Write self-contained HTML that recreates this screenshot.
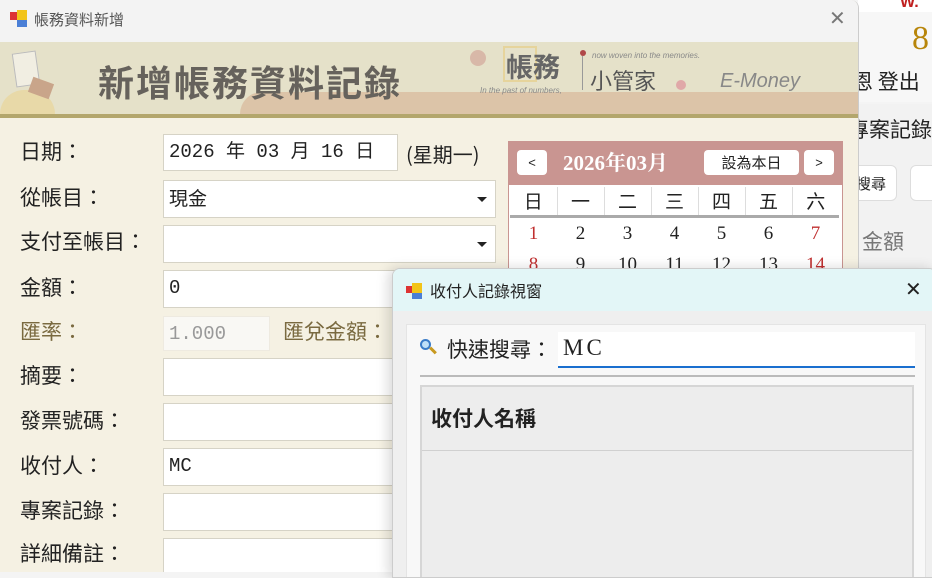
<!DOCTYPE html>
<html><head><meta charset="utf-8"><style>
*{box-sizing:border-box;margin:0;padding:0}
body{width:932px;height:572px;overflow:hidden;position:relative;background:#f4f4f4;font-family:"Liberation Sans","Noto Sans CJK TC",sans-serif;color:#222}
.a{position:absolute;white-space:nowrap}
.lbl{position:absolute;left:20px;font-size:21px;color:#222;font-family:"Noto Sans CJK TC",sans-serif}
.inp{position:absolute;left:163px;background:#fff;border:1px solid #d6d3c6;font-family:"Liberation Mono","Noto Sans CJK TC",monospace;font-size:19px;padding-left:5px;line-height:34px}
.arr{position:absolute;right:8px;top:16px;width:0;height:0;border-left:5px solid transparent;border-right:5px solid transparent;border-top:5px solid #222}
.cal td{width:47px;height:29px;text-align:center;font-size:19px;font-family:"Liberation Serif","Noto Serif CJK SC",serif}
</style></head><body>
<!-- right background app -->
<div class="a" style="left:858px;top:0;width:74px;height:12px;background:#fff"></div>
<div class="a" style="left:900px;top:-6px;font-size:16px;color:#c02020;font-weight:bold">W.</div>
<div class="a" style="left:858px;top:12px;width:74px;height:90px;background:#f7f7f7"></div>
<div class="a" style="left:912px;top:22px;font-size:34px;color:#b8860b;font-family:'Liberation Serif',serif;line-height:34px">8</div>
<div class="a" style="left:852px;top:66px;font-size:21px;font-family:'Noto Sans CJK TC',sans-serif">恩 登出</div>
<div class="a" style="left:858px;top:104px;width:74px;height:468px;background:#f2f2f2"></div>
<div class="a" style="left:848px;top:114px;font-size:21px;font-family:'Noto Sans CJK TC',sans-serif">專案記錄</div>
<div class="a" style="left:845px;top:165px;width:52px;height:36px;background:#fff;border:1px solid #ddd;border-radius:6px;font-size:15px;padding:7px 0 0 10px">搜尋</div>
<div class="a" style="left:910px;top:165px;width:40px;height:36px;background:#fff;border:1px solid #ddd;border-radius:6px"></div>
<div class="a" style="left:862px;top:226px;font-size:21px;color:#777;font-family:'Noto Sans CJK TC',sans-serif">金額</div>

<!-- main window -->
<div class="a" style="left:0;top:0;width:859px;height:572px;background:#f5f1e3;border-right:1px solid #ccc;border-radius:0 8px 0 0;overflow:hidden">
 <div class="a" style="left:0;top:0;width:859px;height:42px;background:#f3f3f3"></div>
 <div class="a" style="left:10px;top:12px;width:8px;height:8px;background:#d33"></div>
 <div class="a" style="left:17px;top:10px;width:10px;height:10px;background:#f2c418"></div>
 <div class="a" style="left:17px;top:20px;width:10px;height:7px;background:#4a7fd6"></div>
 <div class="a" style="left:34px;top:9px;font-size:15px;color:#555;font-family:'Noto Sans CJK TC',sans-serif">帳務資料新增</div>
 <div class="a" style="left:829px;top:6px;font-size:20px;color:#777">✕</div>
 <!-- banner -->
 <div class="a" style="left:0;top:42px;width:859px;height:76px;background:#e5e1c9;border-bottom:4px solid #b3a66c"></div>
 <div class="a" style="left:240px;top:92px;width:620px;height:22px;background:#dcc4a8;border-radius:120px 0 0 0"></div>
 <div class="a" style="left:0;top:90px;width:55px;height:24px;background:#e8d9a8;border-radius:40px 40px 0 0"></div>
 <div class="a" style="left:14px;top:52px;width:24px;height:34px;background:#f1eee2;border:1px solid #bbb;transform:rotate(-8deg)"></div>
 <div class="a" style="left:30px;top:80px;width:22px;height:16px;background:#c9a58a;transform:rotate(20deg)"></div>
 <div class="a" style="left:98px;top:56px;font-size:36px;color:#66625c;letter-spacing:2px;font-weight:bold;font-family:'Noto Sans CJK TC',sans-serif;line-height:50px">新增帳務資料記錄</div>
 <div class="a" style="left:470px;top:50px;width:16px;height:16px;border-radius:50%;background:#d8b8a8"></div>
 <div class="a" style="left:503px;top:46px;width:34px;height:36px;border:2px solid #e6d49c"></div>
 <div class="a" style="left:506px;top:46px;font-size:27px;color:#666;font-weight:bold;font-family:'Noto Sans CJK TC',sans-serif">帳務</div>
 <div class="a" style="left:480px;top:86px;font-size:8px;color:#888;font-style:italic">In the past of numbers,</div>
 <div class="a" style="left:580px;top:50px;width:6px;height:6px;border-radius:50%;background:#b04848"></div>
 <div class="a" style="left:582px;top:56px;width:1px;height:34px;background:#999"></div>
 <div class="a" style="left:592px;top:51px;font-size:8px;color:#888;font-style:italic">now woven into the memories.</div>
 <div class="a" style="left:590px;top:64px;font-size:22px;color:#555;font-family:'Noto Sans CJK TC',sans-serif">小管家</div>
 <div class="a" style="left:676px;top:80px;width:10px;height:10px;border-radius:50%;background:#e0a8a8"></div>
 <div class="a" style="left:720px;top:70px;font-size:20px;color:#888;font-style:italic">E-Money</div>
 <!-- labels -->
 <div class="lbl" style="top:136px">日期：</div>
 <div class="lbl" style="top:182px">從帳目：</div>
 <div class="lbl" style="top:226px">支付至帳目：</div>
 <div class="lbl" style="top:272px">金額：</div>
 <div class="lbl" style="top:316px;color:#7a6a40">匯率：</div>
 <div class="lbl" style="top:360px">摘要：</div>
 <div class="lbl" style="top:405px">發票號碼：</div>
 <div class="lbl" style="top:450px">收付人：</div>
 <div class="lbl" style="top:495px">專案記錄：</div>
 <div class="lbl" style="top:538px">詳細備註：</div>
 <div class="inp" style="top:134px;width:235px;height:37px">2026 年 03 月 16 日</div>
 <div class="a" style="left:406px;top:139px;font-size:20px;font-family:'Noto Sans CJK TC',sans-serif">(星期一)</div>
 <div class="inp" style="top:180px;width:333px;height:38px;font-family:'Noto Sans CJK TC',sans-serif">現金<div class="arr"></div></div>
 <div class="inp" style="top:225px;width:333px;height:38px"><div class="arr"></div></div>
 <div class="inp" style="top:270px;width:240px;height:38px">0</div>
 <div class="inp" style="top:316px;width:107px;height:35px;background:#f9f8f4;border-color:#eeeae0;color:#999">1.000</div>
 <div class="a" style="left:283px;top:316px;font-size:21px;color:#7a6a40;font-family:'Noto Sans CJK TC',sans-serif">匯兌金額：</div>
 <div class="inp" style="top:358px;width:240px;height:38px"></div>
 <div class="inp" style="top:403px;width:240px;height:38px"></div>
 <div class="inp" style="top:448px;width:240px;height:38px">MC</div>
 <div class="inp" style="top:493px;width:240px;height:38px"></div>
 <div class="inp" style="top:538px;width:240px;height:40px"></div>
 <!-- calendar -->
 <div class="a" style="left:508px;top:141px;width:335px;height:140px;background:#fff;border:1px solid #c99591"></div>
 <div class="a" style="left:508px;top:141px;width:335px;height:44px;background:#c99591"></div>
 <div class="a" style="left:517px;top:150px;width:30px;height:25px;background:#fff;border-radius:4px;text-align:center;font-size:13px;line-height:25px">&lt;</div>
 <div class="a" style="left:563px;top:147px;font-size:21px;color:#fff;font-family:'Liberation Serif','Noto Serif CJK SC',serif;font-weight:bold">2026年03月</div>
 <div class="a" style="left:704px;top:150px;width:95px;height:25px;background:#fff;border-radius:4px;text-align:center;font-size:15px;line-height:25px;font-family:'Noto Sans CJK TC',sans-serif">設為本日</div>
 <div class="a" style="left:804px;top:150px;width:30px;height:25px;background:#fff;border-radius:4px;text-align:center;font-size:13px;line-height:25px">&gt;</div>
 <table class="a cal" style="left:510px;top:187px;border-collapse:collapse">
  <tr style="border-bottom:3px solid #aaa"><td style="border-right:1px solid #ddd;font-family:'Noto Sans CJK TC'">日</td><td style="border-right:1px solid #ddd;font-family:'Noto Sans CJK TC'">一</td><td style="border-right:1px solid #ddd;font-family:'Noto Sans CJK TC'">二</td><td style="border-right:1px solid #ddd;font-family:'Noto Sans CJK TC'">三</td><td style="border-right:1px solid #ddd;font-family:'Noto Sans CJK TC'">四</td><td style="border-right:1px solid #ddd;font-family:'Noto Sans CJK TC'">五</td><td style="font-family:'Noto Sans CJK TC'">六</td></tr>
  <tr style="height:34px"><td style="color:#c03030">1</td><td>2</td><td>3</td><td>4</td><td>5</td><td>6</td><td style="color:#c03030">7</td></tr>
  <tr><td style="color:#c03030">8</td><td>9</td><td>10</td><td>11</td><td>12</td><td>13</td><td style="color:#c03030">14</td></tr>
 </table>
</div>

<!-- popup -->
<div class="a" style="left:392px;top:268px;width:545px;height:310px;background:#efefef;border:1px solid #ccc;border-radius:8px 8px 0 0;box-shadow:-4px 0 12px rgba(0,0,0,.15);overflow:hidden">
 <div class="a" style="left:0;top:0;width:545px;height:42px;background:#e3f6f7"></div>
 <div class="a" style="left:13px;top:17px;width:7px;height:7px;background:#d33"></div>
 <div class="a" style="left:19px;top:14px;width:10px;height:10px;background:#f2c418"></div>
 <div class="a" style="left:19px;top:24px;width:10px;height:6px;background:#4a7fd6"></div>
 <div class="a" style="left:37px;top:9px;font-size:16px;color:#222;font-family:'Noto Sans CJK TC',sans-serif">收付人記錄視窗</div>
 <div class="a" style="left:512px;top:8px;font-size:20px;color:#222">✕</div>
 <div class="a" style="left:13px;top:55px;width:520px;height:260px;background:#f8f8f8;border:1px solid #e4e4e4"></div>
 <div class="a" style="left:27px;top:70px;width:11px;height:11px;border-radius:50%;border:2px solid #3a7cc8;background:#bfe0f8"></div>
 <div class="a" style="left:36px;top:80px;width:8px;height:3px;background:#c89a20;transform:rotate(45deg)"></div>
 <div class="a" style="left:54px;top:65px;font-size:21px;font-family:'Noto Sans CJK TC',sans-serif">快速搜尋：</div>
 <div class="a" style="left:165px;top:63px;width:357px;height:36px;background:#fff;border-bottom:2px solid #1a6fcf;font-size:23px;font-family:'Liberation Serif',serif;padding-left:5px;line-height:32px;letter-spacing:3px">MC</div>
 <div class="a" style="left:27px;top:106px;width:495px;height:2px;background:#bbb"></div>
 <div class="a" style="left:27px;top:116px;width:494px;height:200px;background:#ededed;border:2px solid #d6d6d6"></div>
 <div class="a" style="left:29px;top:181px;width:490px;height:1px;background:#d0d0d0"></div>
 <div class="a" style="left:38px;top:134px;font-size:21px;font-weight:bold;font-family:'Noto Sans CJK TC',sans-serif">收付人名稱</div>
</div>
</body></html>
